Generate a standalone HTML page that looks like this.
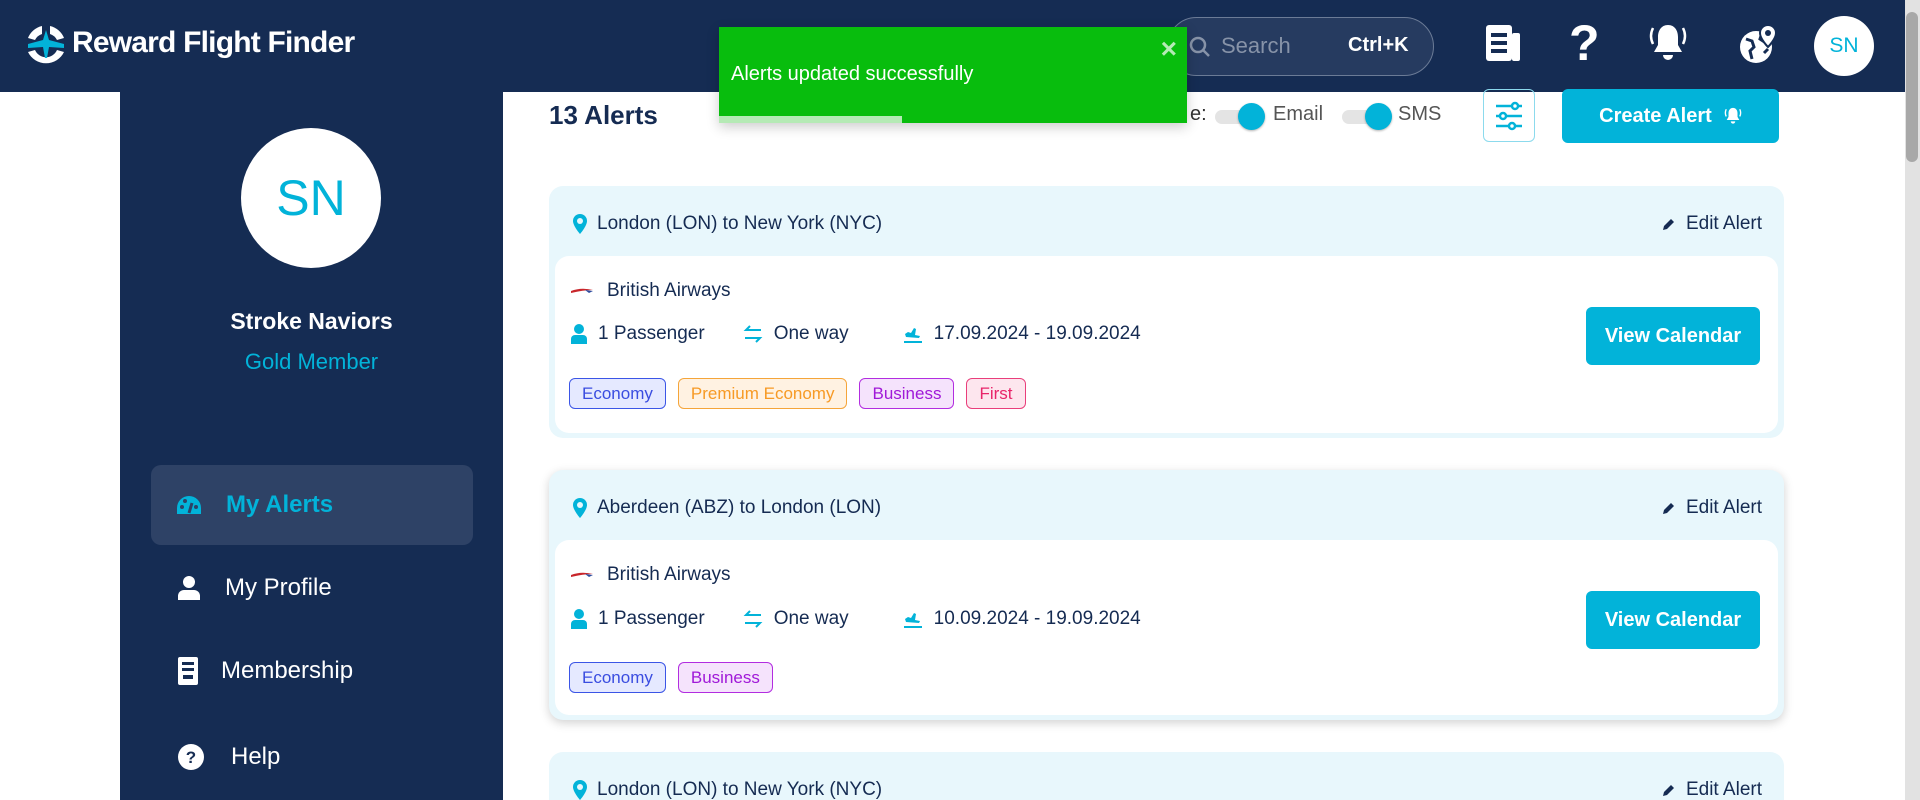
<!DOCTYPE html>
<html><head><meta charset="utf-8">
<style>
*{box-sizing:border-box;margin:0;padding:0}
html,body{width:1920px;height:800px;overflow:hidden}
body{background:#fff;font-family:"Liberation Sans",sans-serif;color:#152b52;position:relative}
.a{position:absolute}
.hdr{left:0;top:0;width:1905px;height:92px;background:#152c53}
.side{left:120px;top:92px;width:383px;height:708px;background:#152c53}
.nav{left:151px;width:322px;height:80px;display:flex;align-items:center;font-size:24px;color:#fff}
.card{left:549px;width:1235px;background:#e8f7fc;border-radius:14px}
.inner{position:absolute;left:6px;right:6px;background:#fff;border-radius:14px}
.route{position:absolute;left:24px;font-size:19px;display:flex;align-items:center;gap:10px}
.edit{position:absolute;right:22px;font-size:19px;display:flex;align-items:center;gap:10px}
.ba{position:absolute;left:16px;font-size:19px;display:flex;align-items:center;gap:14px}
.row{position:absolute;left:16px;font-size:19px;display:flex;align-items:center}
.row span{display:inline-flex;align-items:center;gap:11px}
.tags{position:absolute;left:14px;display:flex;gap:12px}
.tag{height:31px;border:1px solid;border-radius:6px;padding:0 12px;font-size:17px;line-height:29px}
.vc{position:absolute;right:18px;width:174px;height:58px;background:#02b3d9;border-radius:6px;color:#fff;font-size:20px;font-weight:bold;display:flex;align-items:center;justify-content:center}
.tgl{width:50px;height:14px;background:#e4e4e4;border-radius:7px;position:absolute}
.tgl i{position:absolute;right:0;top:-7px;width:27px;height:27px;border-radius:50%;background:#02b3d9;box-shadow:0 1px 2px rgba(0,0,0,.3)}
</style></head><body>
<div class="a hdr"></div>
<svg class="a" style="left:20px;top:20px" width="52" height="52" viewBox="0 0 52 52">
<path d="M8 18 A20 20 0 0 1 22 6 L22 14 A12 12 0 0 0 15 20Z" fill="#fff"/>
<path d="M30 6 A20 20 0 0 1 44 18 L37 20 A12 12 0 0 0 30 14Z" fill="#fff"/>
<path d="M8 32 A20 20 0 0 0 44 32 L37 30 A12 12 0 0 1 15 30Z" fill="#fff"/>
<path d="M26 10 L29 20 L44 24 L44 28 L29 27 L27 38 L25 38 L23 27 L8 28 L8 24 L23 20Z" fill="#02b3d9"/>
</svg>
<div class="a" style="left:72px;top:26px;font-size:30px;font-weight:bold;color:#fff;letter-spacing:-0.8px">Reward Flight Finder</div>
<div class="a" style="left:1167px;top:17px;width:267px;height:59px;border:1px solid #6b7b96;border-radius:30px;background:#263b60"></div>
<svg class="a" style="left:1188px;top:35px" width="24" height="24" viewBox="0 0 24 24"><circle cx="10" cy="10" r="7" stroke="#8793a8" stroke-width="2.5" fill="none"/><path d="M15 15l6 6" stroke="#8793a8" stroke-width="2.5"/></svg>
<div class="a" style="left:1221px;top:33px;font-size:22px;color:#8793a8">Search</div>
<div class="a" style="left:1348px;top:34px;font-size:20px;color:#fff;font-weight:bold">Ctrl+K</div>
<svg class="a" style="left:1484px;top:25px" width="40" height="38" viewBox="0 0 40 38"><rect x="2" y="0" width="26" height="36" rx="3" fill="#fff"/><rect x="28" y="8" width="8" height="28" rx="2" fill="#fff"/><rect x="7" y="8" width="16" height="4" fill="#152c53"/><rect x="7" y="16" width="16" height="4" fill="#152c53"/><rect x="7" y="24" width="16" height="4" fill="#152c53"/></svg>
<div class="a" style="left:1569px;top:14px;font-size:50px;font-weight:bold;color:#fff">?</div>
<svg class="a" style="left:1648px;top:22px" width="40" height="42" viewBox="0 0 40 42"><path d="M20 3c-7 0-10 6-10 12v8l-4 7h28l-4-7v-8c0-6-3-12-10-12z" fill="#fff"/><path d="M15 33h10a5 5 0 0 1-10 0z" fill="#fff"/><path d="M5 6q-4 8 0 16M35 6q4 8 0 16" stroke="#fff" stroke-width="2.5" fill="none"/></svg>
<svg class="a" style="left:1738px;top:25px" width="40" height="40" viewBox="0 0 40 40"><circle cx="18" cy="22" r="16" fill="#fff"/><path d="M8 14l6 2 2 6-4 4 2 8M24 8l-2 6 6 4M26 28l4-4" stroke="#152c53" stroke-width="3" fill="none"/><path d="M30 0a8 8 0 0 1 8 8c0 6-8 14-8 14s-8-8-8-14a8 8 0 0 1 8-8z" fill="#fff" stroke="#152c53" stroke-width="2"/><circle cx="30" cy="8" r="3" fill="#152c53"/></svg>
<div class="a" style="left:1814px;top:16px;width:60px;height:60px;border-radius:50%;background:#fff;color:#02b3d9;font-size:21px;display:flex;align-items:center;justify-content:center">SN</div>
<div class="a" style="left:1905px;top:0;width:15px;height:800px;background:#e2e2e2"></div>
<div class="a" style="left:1906px;top:12px;width:12px;height:150px;border-radius:6px;background:#a8a8a8"></div>
<div class="a side"></div>
<div class="a" style="left:241px;top:128px;width:140px;height:140px;border-radius:50%;background:#fff;color:#02b3d9;font-size:50px;display:flex;align-items:center;justify-content:center">SN</div>
<div class="a" style="left:120px;top:308px;width:383px;text-align:center;font-size:23px;font-weight:bold;color:#fff">Stroke Naviors</div>
<div class="a" style="left:120px;top:349px;width:383px;text-align:center;font-size:22px;color:#02b3d9">Gold Member</div>
<div class="a nav" style="top:465px;background:#2e4266;border-radius:10px;color:#02b3d9;font-weight:bold">
<svg style="margin-left:25px;margin-right:24px" width="26" height="20" viewBox="0 0 26 20"><path d="M13 1A12 12 0 0 0 1 13v6h24v-6A12 12 0 0 0 13 1z" fill="#02b3d9"/><circle cx="6" cy="12" r="2" fill="#2e4266"/><circle cx="9" cy="6" r="2" fill="#2e4266"/><circle cx="20" cy="12" r="2" fill="#2e4266"/><path d="M13 18l3-10" stroke="#2e4266" stroke-width="3"/></svg>My Alerts</div>
<div class="a nav" style="top:548px">
<svg style="margin-left:27px;margin-right:25px" width="22" height="24" viewBox="0 0 22 24"><circle cx="11" cy="6" r="6" fill="#fff"/><path d="M0 24v-4a6 6 0 0 1 6-6h10a6 6 0 0 1 6 6v4z" fill="#fff"/></svg>My Profile</div>
<div class="a nav" style="top:631px">
<svg style="margin-left:27px;margin-right:23px" width="20" height="28" viewBox="0 0 20 28"><rect width="20" height="28" rx="2" fill="#fff"/><rect x="4" y="5" width="12" height="3" fill="#152c53"/><rect x="4" y="11" width="12" height="3" fill="#152c53"/><rect x="5" y="18" width="10" height="4" fill="#152c53"/></svg>Membership</div>
<div class="a nav" style="top:717px">
<svg style="margin-left:26px;margin-right:26px" width="28" height="28" viewBox="0 0 28 28"><circle cx="14" cy="14" r="13" fill="#fff"/><text x="14" y="20" text-anchor="middle" font-size="17" font-weight="bold" fill="#152c53" font-family="Liberation Sans">?</text></svg>Help</div>
<div class="a" style="left:549px;top:100px;font-size:26px;font-weight:bold">13 Alerts</div>
<div class="a" style="left:1190px;top:103px;font-size:20px;color:#333">e:</div>
<div class="a tgl" style="left:1215px;top:110px"><i></i></div>
<div class="a" style="left:1273px;top:103px;font-size:20px;color:#555">Email</div>
<div class="a tgl" style="left:1342px;top:110px"><i></i></div>
<div class="a" style="left:1398px;top:103px;font-size:20px;color:#555">SMS</div>
<div class="a" style="left:1483px;top:89px;width:52px;height:53px;border:1px solid #8cdaed;border-radius:6px"></div>
<svg class="a" style="left:1494px;top:101px" width="30" height="30" viewBox="0 0 30 30" stroke="#02b3d9" stroke-width="2.5" fill="#fff"><path d="M2 5h26M2 15h26M2 25h26"/><circle cx="21" cy="5" r="3"/><circle cx="9" cy="15" r="3"/><circle cx="18" cy="25" r="3"/></svg>
<div class="a" style="left:1562px;top:89px;width:217px;height:54px;background:#02b3d9;border-radius:6px;color:#fff;font-size:20px;font-weight:bold;display:flex;align-items:center;justify-content:center;gap:12px">Create Alert <svg width="18" height="20" viewBox="0 0 40 42"><path d="M20 3c-7 0-10 6-10 12v8l-4 7h28l-4-7v-8c0-6-3-12-10-12z" fill="#fff"/><path d="M15 33h10a5 5 0 0 1-10 0z" fill="#fff"/><path d="M5 6q-4 8 0 16M35 6q4 8 0 16" stroke="#fff" stroke-width="3" fill="none"/></svg></div>
<div class="a card" style="top:186px;height:252px">
<div class="route" style="top:27px"><svg width="14" height="20" viewBox="0 0 14 20"><path d="M7 0a7 7 0 0 1 7 7c0 5-7 13-7 13S0 12 0 7a7 7 0 0 1 7-7z" fill="#02b3d9"/><circle cx="7" cy="7" r="3" fill="#e8f7fc"/></svg>London (LON) to New York (NYC)</div>
<div class="edit" style="top:27px"><svg width="14" height="14" viewBox="0 0 14 14"><path d="M1 13l1-4 7-7 3 3-7 7z" fill="#152b52"/></svg>Edit Alert</div>
<div class="inner" style="top:70px;height:177px">
<div class="ba" style="top:24px"><svg width="22" height="8" viewBox="0 0 22 8"><path d="M0 4q10-4 22-1q-10 0-22 3z" fill="#c8262b"/><path d="M14 3l8 1-4 2z" fill="#2b4da0"/></svg>British Airways</div>
<div class="row" style="top:67px"><span><svg width="16" height="20" viewBox="0 0 16 20"><circle cx="8" cy="5" r="5" fill="#02b3d9"/><path d="M0 20v-5a4 4 0 0 1 4-4h8a4 4 0 0 1 4 4v5z" fill="#02b3d9"/></svg>1 Passenger</span><span style="margin-left:38px"><svg width="20" height="18" viewBox="0 0 20 18" stroke="#02b3d9" stroke-width="2" fill="none"><path d="M18 5H3l4-4M2 13h15l-4 4"/></svg>One way</span><span style="margin-left:54px"><svg width="20" height="20" viewBox="0 0 20 20"><path d="M2 10l3-2 3 1 3-5 2 1-1 6 5 1-1 2-13-1z" fill="#02b3d9"/><rect x="1" y="17" width="18" height="2" fill="#02b3d9"/></svg>17.09.2024 - 19.09.2024</span></div>
<div class="tags" style="top:122px"><div class="tag" style="color:#3a4de0;border-color:#3b55e6;background:#e5e9ff">Economy</div><div class="tag" style="color:#f79a25;border-color:#f5a53a;background:#fff2e2">Premium Economy</div><div class="tag" style="color:#a019d8;border-color:#b22de0;background:#f5e3fc">Business</div><div class="tag" style="color:#e8256a;border-color:#e93e7b;background:#fde6ee">First</div></div>
<div class="vc" style="top:51px">View Calendar</div>
</div></div>
<div class="a card" style="top:470px;height:250px;box-shadow:0 3px 10px rgba(0,0,0,.18)">
<div class="route" style="top:27px"><svg width="14" height="20" viewBox="0 0 14 20"><path d="M7 0a7 7 0 0 1 7 7c0 5-7 13-7 13S0 12 0 7a7 7 0 0 1 7-7z" fill="#02b3d9"/><circle cx="7" cy="7" r="3" fill="#e8f7fc"/></svg>Aberdeen (ABZ) to London (LON)</div>
<div class="edit" style="top:27px"><svg width="14" height="14" viewBox="0 0 14 14"><path d="M1 13l1-4 7-7 3 3-7 7z" fill="#152b52"/></svg>Edit Alert</div>
<div class="inner" style="top:70px;height:175px">
<div class="ba" style="top:24px"><svg width="22" height="8" viewBox="0 0 22 8"><path d="M0 4q10-4 22-1q-10 0-22 3z" fill="#c8262b"/><path d="M14 3l8 1-4 2z" fill="#2b4da0"/></svg>British Airways</div>
<div class="row" style="top:68px"><span><svg width="16" height="20" viewBox="0 0 16 20"><circle cx="8" cy="5" r="5" fill="#02b3d9"/><path d="M0 20v-5a4 4 0 0 1 4-4h8a4 4 0 0 1 4 4v5z" fill="#02b3d9"/></svg>1 Passenger</span><span style="margin-left:38px"><svg width="20" height="18" viewBox="0 0 20 18" stroke="#02b3d9" stroke-width="2" fill="none"><path d="M18 5H3l4-4M2 13h15l-4 4"/></svg>One way</span><span style="margin-left:54px"><svg width="20" height="20" viewBox="0 0 20 20"><path d="M2 10l3-2 3 1 3-5 2 1-1 6 5 1-1 2-13-1z" fill="#02b3d9"/><rect x="1" y="17" width="18" height="2" fill="#02b3d9"/></svg>10.09.2024 - 19.09.2024</span></div>
<div class="tags" style="top:122px"><div class="tag" style="color:#3a4de0;border-color:#3b55e6;background:#e5e9ff">Economy</div><div class="tag" style="color:#a019d8;border-color:#b22de0;background:#f5e3fc">Business</div></div>
<div class="vc" style="top:51px">View Calendar</div>
</div></div>
<div class="a card" style="top:752px;height:48px;border-radius:14px 14px 0 0">
<div class="route" style="top:27px"><svg width="14" height="20" viewBox="0 0 14 20"><path d="M7 0a7 7 0 0 1 7 7c0 5-7 13-7 13S0 12 0 7a7 7 0 0 1 7-7z" fill="#02b3d9"/><circle cx="7" cy="7" r="3" fill="#e8f7fc"/></svg>London (LON) to New York (NYC)</div>
<div class="edit" style="top:27px"><svg width="14" height="14" viewBox="0 0 14 14"><path d="M1 13l1-4 7-7 3 3-7 7z" fill="#152b52"/></svg>Edit Alert</div>
</div>
<div class="a" style="left:719px;top:27px;width:468px;height:96px;background:#08bd0d;box-shadow:0 4px 12px rgba(0,0,0,.2)">
<div class="a" style="left:12px;top:36px;font-size:20px;color:#fff">Alerts updated successfully</div>
<div class="a" style="right:10px;top:6px;font-size:28px;font-weight:bold;color:#b5eab5">×</div>
<div class="a" style="left:0;bottom:0;width:183px;height:7px;background:#b5eab5"></div>
</div>
</body></html>
